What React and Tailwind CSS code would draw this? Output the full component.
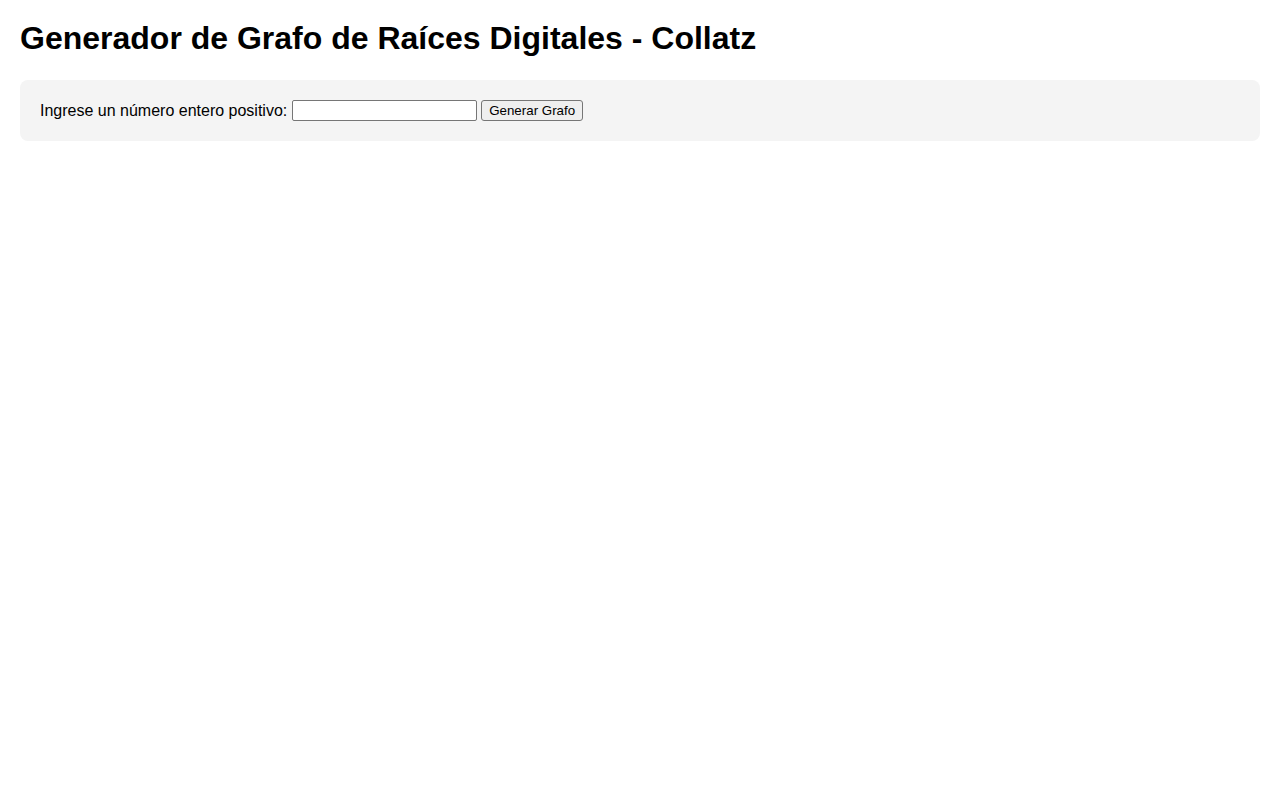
import React from 'react';

const App = () => {
  return (
    <div className="min-h-screen bg-white p-5 text-black font-['Liberation_Sans',Arial,sans-serif]">
      {/* Title */}
      <h1 className="text-[32px] font-bold leading-[37px] mb-[23px]">
        Generador de Grafo de Raíces Digitales - Collatz
      </h1>

      {/* Form panel */}
      <div className="bg-[#f4f4f4] rounded-lg p-5 text-base leading-[21px]">
        <label htmlFor="numero">Ingrese un número entero positivo:</label>{' '}
        <input
          id="numero"
          type="number"
          className="w-[185px] h-[21px] align-top bg-white border border-[#767676] rounded-[2px] px-[2px] text-[13.33px] outline-none"
        />{' '}
        <button
          type="button"
          className="h-[21px] align-top px-[7px] bg-[#efefef] border border-[#767676] rounded-[3px] text-[13.33px] leading-[19px] text-black"
        >
          Generar Grafo
        </button>
      </div>
    </div>
  );
};

export default App;
